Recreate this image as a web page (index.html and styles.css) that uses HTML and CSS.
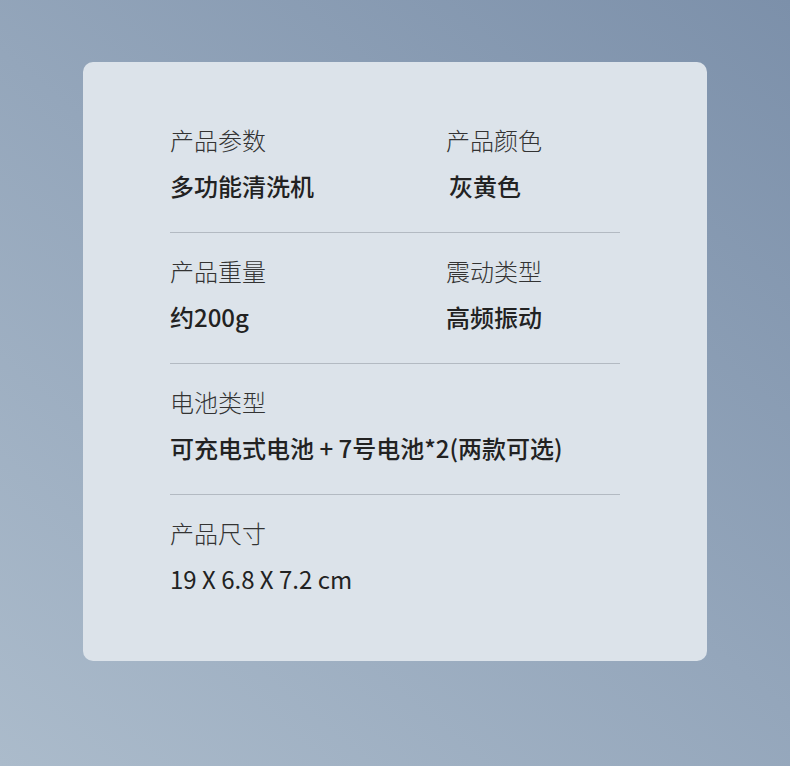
FILE: index.html
```html
<!DOCTYPE html>
<html lang="zh-CN">
<head>
  <meta charset="UTF-8" />
  <meta name="viewport" content="width=device-width, initial-scale=1.0"/>
  <title>产品参数</title>
  <link rel="stylesheet" href="styles.css">
</head>
<body>
  <div class="spec-card">
    <div class="spec-row two-col">
      <div class="spec-item">
        <div class="spec-label">产品参数</div>
        <div class="spec-value">多功能清洗机</div>
      </div>
      <div class="spec-item">
        <div class="spec-label">产品颜色</div>
        <div class="spec-value shift">灰黄色</div>
      </div>
    </div>

    <div class="spec-row two-col">
      <div class="spec-item">
        <div class="spec-label">产品重量</div>
        <div class="spec-value">约200g</div>
      </div>
      <div class="spec-item">
        <div class="spec-label">震动类型</div>
        <div class="spec-value">高频振动</div>
      </div>
    </div>

    <div class="spec-row">
      <div class="spec-item">
        <div class="spec-label">电池类型</div>
        <div class="spec-value">可充电式电池 + 7号电池*2(两款可选)</div>
      </div>
    </div>

    <div class="spec-row last">
      <div class="spec-item">
        <div class="spec-label">产品尺寸</div>
        <div class="spec-value plain">19 X 6.8 X 7.2 cm</div>
      </div>
    </div>
  </div>
</body>
</html>
```

FILE: styles.css
```css
* {
  margin: 0;
  padding: 0;
  box-sizing: border-box;
}

html, body {
  width: 790px;
  height: 766px;
}

body {
  font-family: "Noto Sans CJK SC", "Noto Sans", sans-serif;
  background: linear-gradient(40deg, #abbbcb 0%, #94a6bb 50%, #7c90aa 100%);
  padding: 62px 83px 0;
}

.spec-card {
  width: 624px;
  height: 599px;
  background: #dce3ea;
  border-radius: 10px;
  padding: 40px 87px 0;
}

.spec-row {
  padding: 20px 0 28px;
  border-bottom: 1px solid #b3bac2;
}

.spec-row.last {
  border-bottom: none;
}

.two-col {
  display: grid;
  grid-template-columns: 276px 1fr;
}

.spec-label {
  font-size: 24px;
  line-height: 36px;
  font-weight: 300;
  color: #333;
}

.spec-value {
  margin-top: 10px;
  font-size: 24px;
  line-height: 36px;
  font-weight: 500;
  color: #222;
}

.spec-value.shift {
  padding-left: 3px;
}

.spec-value.plain {
  font-weight: 400;
}
```
